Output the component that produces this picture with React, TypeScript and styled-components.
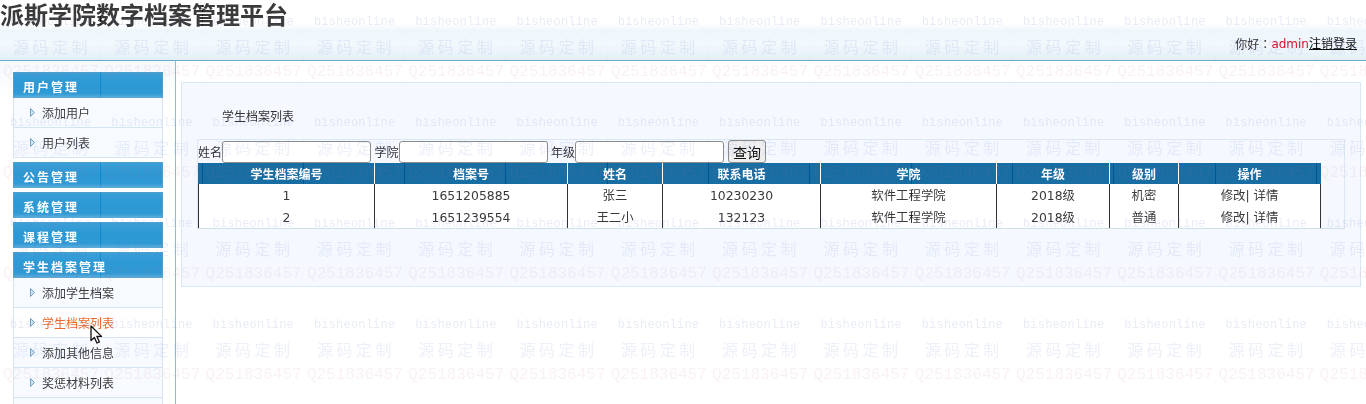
import styled, { createGlobalStyle } from "styled-components";

const GlobalStyle = createGlobalStyle`
  html, body {
    margin: 0;
    padding: 0;
    background: #fff;
    font-family: "DejaVu Sans", "Noto Sans CJK SC", sans-serif;
    font-size: 12px;
    color: #333;
  }
`;

const Page = styled.div`
  position: relative;
  width: 1366px;
  height: 404px;
  overflow: hidden;
`;

const Header = styled.header`
  height: 60px;
  border-bottom: 1px solid #6fa9cd;
  background: linear-gradient(#fff 0, #fff 23px, #eef6fc 31px, #f3f8fc 44px, #e2eff8 60px);
  display: flex;
  flex-direction: column;
`;

const Title = styled.h1`
  margin: 0;
  height: 32px;
  font-size: 24px;
  line-height: 33px;
  font-weight: 700;
  color: #3a3a3a;
`;

const UserBar = styled.div`
  display: flex;
  justify-content: flex-end;
  padding-right: 9px;
  line-height: 24px;
  color: #333;
`;

const Greeting = styled.span`
  font-family: "Noto Sans CJK TC", sans-serif;
`;

const UserName = styled.span`
  color: #d8112c;
`;

const Logout = styled.a`
  color: #111;
  text-decoration: underline;
`;

const Body = styled.div`
  display: flex;
  align-items: stretch;
  height: 343px;
`;

const Sidebar = styled.aside`
  width: 175px;
  flex: none;
  border-right: 1px solid #8dbbd8;
  padding-top: 11px;
  background: linear-gradient(#f4f9fd, #fff 40px);
`;

const Menu = styled.nav`
  width: 150px;
  margin-left: 13px;
  display: flex;
  flex-direction: column;
  gap: 4px;
`;

const MenuGroup = styled.div`
  display: flex;
  flex-direction: column;
`;

const MenuTitle = styled.div`
  height: 26px;
  box-sizing: border-box;
  border: 1px solid #4f9fcd;
  border-bottom-color: #5aa9d4;
  background: linear-gradient(#3a9fd7, #2c98d4 45%, #2f9ad5 85%, #57abdc);
  color: #fff;
  font-weight: 700;
  font-size: 12px;
  letter-spacing: 2px;
  line-height: 28px;
  padding-left: 9px;
  font-family: "Noto Sans CJK SC", sans-serif;
`;

const MenuItem = styled.a<{ $active?: boolean }>`
  height: 30px;
  flex: none;
  box-sizing: border-box;
  display: flex;
  align-items: center;
  gap: 7px;
  padding: 0 0 0 16px;
  border: 1px solid #d4e4f0;
  border-top: 0;
  background: ${(p) => (p.$active ? "#fff" : "#f7fbff")};
  color: ${(p) => (p.$active ? "#e8692b" : "#3c3c3c")};
  font-size: 12px;
`;

const Main = styled.main`
  flex: 1;
  padding: 21px 5px 0 5px;
`;

const Panel = styled.section`
  height: 205px;
  box-sizing: border-box;
  border: 1px solid #d9e8f5;
  background: #f5f9ff;
  padding: 23px 15px 0;
`;

const Caption = styled.div`
  height: 33px;
  padding-left: 25px;
  line-height: 23px;
  color: #333;
`;

const ListBox = styled.div`
  height: 90px;
  box-sizing: border-box;
  border: 1px solid #dbe8f3;
  border-bottom-color: #d0dfeb;
  overflow: hidden;
  background: #f5f9ff;
`;

const SearchForm = styled.form`
  display: flex;
  align-items: flex-end;
  height: 23px;
  color: #333;
`;

const FieldLabel = styled.label`
  font-size: 12px;
  line-height: 19px;
`;

const SearchInput = styled.input`
  width: 149px;
  height: 22px;
  box-sizing: border-box;
  margin: 0 3.5px 0 0;
  padding: 0 2px;
  border: 1px solid #8d8d8d;
  border-radius: 3px;
  background: #fff;
`;

const SearchButton = styled.button`
  width: 38px;
  height: 23px;
  box-sizing: border-box;
  margin: 0 0 0 0.5px;
  padding: 0;
  border: 1px solid #8d8d8d;
  border-radius: 3px;
  background: #efefef;
  color: #111;
  font-family: "Noto Sans CJK SC", sans-serif;
  font-size: 14px;
  line-height: 20px;
`;

const Table = styled.table`
  width: 1122px;
  table-layout: fixed;
  border-collapse: collapse;
  background: #fff;
`;

const HeadCell = styled.th`
  height: 20px;
  padding: 0 0 1px;
  background: #186ea3;
  color: #fff;
  font-size: 12px;
  font-weight: 700;
  text-align: center;
  border-left: 1px solid #fff;
  &:first-child {
    border-left: 1px solid #186ea3;
  }
  &:last-child {
    border-right: 1px solid #186ea3;
  }
`;

const Cell = styled.td`
  height: 22px;
  padding: 0;
  text-align: center;
  color: #3a3a3a;
  font-size: 12.4px;
  border-left: 1px solid #333;
  border-right: 1px solid #333;
`;

const Watermark = styled.div`
  position: absolute;
  inset: 0;
  width: 1500px;
  display: flex;
  flex-wrap: wrap;
  align-content: flex-start;
  pointer-events: none;
`;

const Tile = styled.div`
  position: relative;
  width: 101.3px;
  height: 101px;
  flex: none;
  &::after {
    content: "";
    position: absolute;
    top: 0;
    bottom: 0;
    right: 0;
    width: 1px;
    background: #dcdcdc;
    mix-blend-mode: color-burn;
  }
`;

const MarkLatin = styled.span`
  position: absolute;
  left: 10px;
  top: 15px;
  white-space: nowrap;
  font-family: "Liberation Mono", monospace;
  font-size: 12px;
  line-height: 14px;
  letter-spacing: 0.2px;
  color: rgba(120, 135, 200, 0.16);
`;

const MarkCjk = styled.span`
  position: absolute;
  left: 13px;
  top: 36px;
  white-space: nowrap;
  font-family: "Noto Sans CJK SC", sans-serif;
  font-size: 16px;
  line-height: 20px;
  letter-spacing: 3.5px;
  color: rgba(90, 110, 200, 0.11);
`;

const MarkNumber = styled.span`
  position: absolute;
  left: 3px;
  top: 63px;
  white-space: nowrap;
  font-family: "Liberation Mono", monospace;
  font-size: 16px;
  line-height: 18px;
  color: rgba(205, 100, 130, 0.09);
`;

const Cursor = styled.svg`
  position: absolute;
  left: 90px;
  top: 325px;
  width: 13px;
  height: 20px;
`;

const Arrow = () => (
  <svg width="5" height="9" viewBox="0 0 5 9" style={{ flex: "none" }}>
    <path d="M0.5 0.5 L4.5 4.5 L0.5 8.5 Z" fill="#cfe2f0" stroke="#6fa3c8" strokeWidth="1" />
  </svg>
);

const columns = [176, 193, 95, 158, 176, 113, 69, 142];
const heads = ["学生档案编号", "档案号", "姓名", "联系电话", "学院", "年级", "级别", "操作"];
const rows = [
  ["1", "1651205885", "张三", "10230230", "软件工程学院", "2018级", "机密", "修改| 详情"],
  ["2", "1651239554", "王二小", "132123", "软件工程学院", "2018级", "普通", "修改| 详情"],
];

const menus = [
  { title: "用户管理", items: ["添加用户", "用户列表"] },
  { title: "公告管理", items: [] },
  { title: "系统管理", items: [] },
  { title: "课程管理", items: [] },
  { title: "学生档案管理", items: ["添加学生档案", "学生档案列表", "添加其他信息", "奖惩材料列表", ""] },
];

const App = () => {
  return (
    <Page>
      <GlobalStyle />
      <Header>
        <Title>派斯学院数字档案管理平台</Title>
        <UserBar>
          <Greeting>你好：</Greeting>
          <UserName>admin</UserName>
          <Logout>注销登录</Logout>
        </UserBar>
      </Header>
      <Body>
        <Sidebar>
          <Menu>
            {menus.map((m) => (
              <MenuGroup key={m.title}>
                <MenuTitle>{m.title}</MenuTitle>
                {m.items.map((item) => (
                  <MenuItem key={item} $active={item === "学生档案列表"}>
                    {item && <Arrow />}
                    {item}
                  </MenuItem>
                ))}
              </MenuGroup>
            ))}
          </Menu>
        </Sidebar>
        <Main>
          <Panel>
            <Caption>学生档案列表</Caption>
            <ListBox>
              <SearchForm>
                <FieldLabel>姓名</FieldLabel>
                <SearchInput />
                <FieldLabel>学院</FieldLabel>
                <SearchInput />
                <FieldLabel>年级</FieldLabel>
                <SearchInput />
                <SearchButton type="button">查询</SearchButton>
              </SearchForm>
              <Table>
                <colgroup>
                  {columns.map((w, i) => (
                    <col key={i} width={w} />
                  ))}
                </colgroup>
                <thead>
                  <tr>
                    {heads.map((h) => (
                      <HeadCell key={h}>{h}</HeadCell>
                    ))}
                  </tr>
                </thead>
                <tbody>
                  {rows.map((r) => (
                    <tr key={r[0]}>
                      {r.map((c, i) => (
                        <Cell key={i}>{c}</Cell>
                      ))}
                    </tr>
                  ))}
                </tbody>
              </Table>
            </ListBox>
          </Panel>
        </Main>
      </Body>
      <Watermark aria-hidden>
        {Array.from({ length: 56 }).map((_, i) => (
          <Tile key={i}>
            <MarkLatin>bisheonline</MarkLatin>
            <MarkCjk>源码定制</MarkCjk>
            <MarkNumber>Q251836457</MarkNumber>
          </Tile>
        ))}
      </Watermark>
      <Cursor viewBox="0 0 13 20">
        <path
          d="M1 1 L1 15.5 L4.4 12.4 L6.9 18 L9.4 16.9 L6.9 11.4 L11.5 11.4 Z"
          fill="#fff"
          stroke="#111"
          strokeWidth="1.3"
          strokeLinejoin="round"
        />
      </Cursor>
    </Page>
  );
};

export default App;
